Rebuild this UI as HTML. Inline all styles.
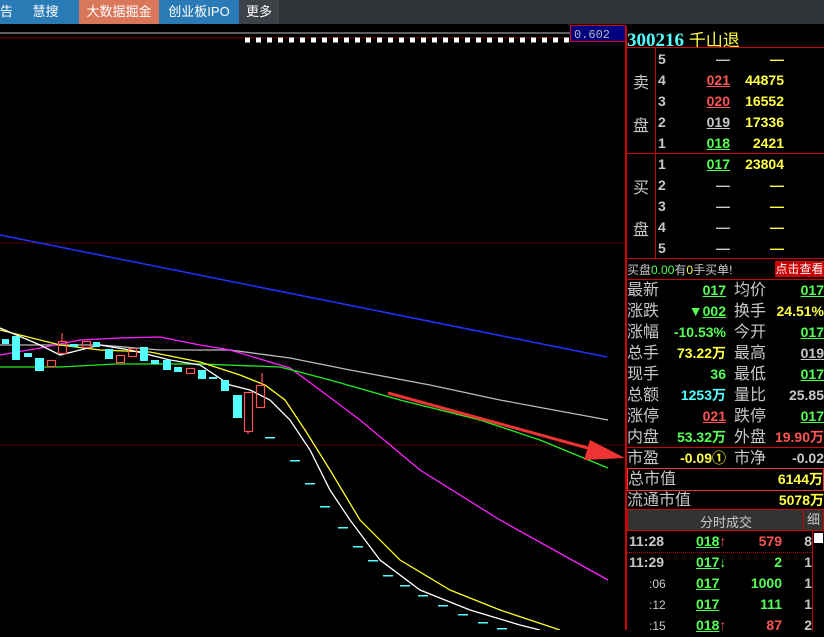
<!DOCTYPE html>
<html><head><meta charset="utf-8"><style>
*{margin:0;padding:0;box-sizing:border-box}
body{width:824px;height:630px;background:#000;overflow:hidden;position:relative;font-family:"Liberation Sans","Noto Sans CJK SC",sans-serif;color:#c8c8c8}
.tab{position:absolute;top:0;height:24px;line-height:24px;color:#fff;font-size:13px;text-align:center}
.a{position:absolute;white-space:nowrap}
.lb{font-size:16px;color:#c8c8c8}
.v{font-size:14px;font-weight:bold;text-align:right}
.g{color:#55ff55}.r{color:#ff5555}.y{color:#ffff44}.w{color:#c8c8c8}.c{color:#55ffff}
u{text-decoration:underline}
</style></head><body>
<div style="position:absolute;left:0;top:0;width:824px;height:24px;background:#2f3237"></div>
<div class="tab" style="left:0;width:12px;background:#2a7ab5">告</div>
<div class="tab" style="left:12px;width:67px;background:#2a7ab5">慧搜</div>
<div class="tab" style="left:79px;width:80px;background:#d9775a">大数据掘金</div>
<div class="tab" style="left:159px;width:80px;background:#2a7ab5">创业板IPO</div>
<div class="tab" style="left:239px;width:40px;background:#3d4148">更多</div>

<svg width="626" height="606" style="position:absolute;left:0;top:24px" viewBox="0 24 626 606">
<line x1="0" y1="33" x2="626" y2="33" stroke="#bbb"/>
<line x1="0" y1="38" x2="570" y2="38" stroke="#700"/>
<line x1="245" y1="40" x2="570" y2="40" stroke="#fff" stroke-width="5" stroke-dasharray="5 6"/>
<rect x="570.5" y="25.5" width="55" height="16" fill="#000080" stroke="#d00"/>
<text x="574" y="38" fill="#bbb" font-size="12" font-family="Liberation Mono">0.602</text>
<line x1="0" y1="243" x2="626" y2="243" stroke="#5a0000"/>
<line x1="0" y1="445" x2="626" y2="445" stroke="#5a0000"/>
<line x1="0" y1="235" x2="607" y2="357" stroke="#2233ff" stroke-width="1.5"/>
<g fill="none" stroke-width="1.3">
<polyline stroke="#bbb" points="0,345 100,345 160,350 230,350 290,358 350,370 430,385 500,400 608,420"/>
<polyline stroke="#ff22ff" points="0,355 40,348 80,340 120,338 160,337 200,345 230,350 270,362 290,368 320,390 360,420 420,470 500,520 608,580"/>
<polyline stroke="#22ee22" points="0,367 60,367 115,364 200,364 280,367 330,380 400,400 480,420 540,440 608,468"/>
<polyline stroke="#ffff22" points="0,330 60,345 100,350 150,352 200,362 240,375 265,385 285,400 305,430 330,470 360,520 400,560 450,590 500,610 560,630"/>
<polyline stroke="#fff" points="0,328 40,345 60,355 100,345 130,350 170,360 200,365 230,385 250,390 270,400 290,420 310,450 330,490 350,520 380,560 420,590 470,610 520,625 540,630"/>
</g>
<g fill="#55ffff">
<rect x="2" y="339" width="7" height="5"/><rect x="12" y="336" width="8" height="24"/><rect x="24" y="353" width="8" height="4"/><rect x="35" y="358" width="9" height="13"/><rect x="70" y="344" width="8" height="3"/><rect x="93" y="342" width="7" height="5"/><rect x="105" y="349" width="8" height="10"/><rect x="140" y="347" width="8" height="14"/><rect x="151" y="360" width="8" height="4"/><rect x="163" y="360" width="8" height="10"/><rect x="174" y="367" width="8" height="5"/><rect x="198" y="370" width="8" height="9"/><rect x="209" y="377" width="8" height="2"/><rect x="221" y="380" width="8" height="11"/><rect x="233" y="395" width="9" height="23"/>
<rect x="265" y="437" width="10" height="1.5"/><rect x="290" y="460" width="10" height="1.5"/><rect x="305" y="483" width="10" height="1.5"/><rect x="320" y="506" width="10" height="1.5"/><rect x="338" y="527" width="10" height="1.5"/><rect x="353" y="546" width="10" height="1.5"/><rect x="368" y="560" width="10" height="1.5"/><rect x="383" y="575" width="10" height="1.5"/><rect x="400" y="585" width="10" height="1.5"/><rect x="418" y="595" width="10" height="1.5"/><rect x="438" y="605" width="10" height="1.5"/><rect x="458" y="614" width="10" height="1.5"/><rect x="478" y="622" width="10" height="1.5"/><rect x="497" y="628" width="10" height="1.5"/>
</g>
<g fill="none" stroke="#ff5555" stroke-width="1.2">
<rect x="47.5" y="360.5" width="8" height="6"/><rect x="58.5" y="341.5" width="8" height="12"/><rect x="82.5" y="341.5" width="8" height="6"/><rect x="116.5" y="355.5" width="8" height="7"/><rect x="128.5" y="348.5" width="8" height="8"/><rect x="186.5" y="368.5" width="8" height="5"/><rect x="244.5" y="392.5" width="8" height="39"/><rect x="256.5" y="385.5" width="8" height="22"/>
<line x1="262" y1="373" x2="262" y2="386"/><line x1="248" y1="431" x2="248" y2="434"/><line x1="62" y1="333" x2="62" y2="342"/>
</g>
<line x1="388" y1="393" x2="595" y2="450" stroke="#ee3333" stroke-width="3"/>
<polygon points="625,458 590,440 584,460" fill="#ee3333"/>
</svg>

<!-- right panel -->
<div style="position:absolute;left:625px;top:26px;width:2px;height:604px;background:#c00"></div>
<div class="a" style="left:627px;top:26px;font-size:19px;font-weight:bold;color:#55ffff;font-family:'Liberation Serif',serif">300216 <span style="color:#ffff44;font-family:'Noto Sans CJK SC';font-weight:normal;font-size:17px">千山退</span></div>
<div style="position:absolute;left:626px;top:47px;width:198px;height:1px;background:#c00"></div>
<div style="position:absolute;left:626px;top:153px;width:198px;height:1px;background:#c00"></div>
<div style="position:absolute;left:626px;top:258px;width:198px;height:1px;background:#c00"></div>
<div style="position:absolute;left:626px;top:279px;width:198px;height:1px;background:#c00"></div>
<div style="position:absolute;left:626px;top:447px;width:198px;height:1px;background:#c00"></div>
<div style="position:absolute;left:655px;top:47px;width:1px;height:211px;background:#c00"></div>
<div class="a lb" style="left:633px;top:69px">卖</div><div class="a lb" style="left:633px;top:112px">盘</div>
<div class="a lb" style="left:633px;top:174px">买</div><div class="a lb" style="left:633px;top:216px">盘</div>

<div style="position:absolute;left:658px;top:49px;width:166px;font-size:14px;font-weight:bold;line-height:21px">
<div style="position:relative;height:21px"><span class="w">5</span><span class="a w" style="right:94px">—</span><span class="a y" style="right:40px">—</span></div>
<div style="position:relative;height:21px"><span class="w">4</span><span class="a r" style="right:94px"><u>021</u></span><span class="a y" style="right:40px">44875</span></div>
<div style="position:relative;height:21px"><span class="w">3</span><span class="a r" style="right:94px"><u>020</u></span><span class="a y" style="right:40px">16552</span></div>
<div style="position:relative;height:21px"><span class="w">2</span><span class="a w" style="right:94px"><u>019</u></span><span class="a y" style="right:40px">17336</span></div>
<div style="position:relative;height:21px"><span class="w">1</span><span class="a g" style="right:94px"><u>018</u></span><span class="a y" style="right:40px">2421</span></div>
</div>
<div style="position:absolute;left:658px;top:154px;width:166px;font-size:14px;font-weight:bold;line-height:21px">
<div style="position:relative;height:21px"><span class="w">1</span><span class="a g" style="right:94px"><u>017</u></span><span class="a y" style="right:40px">23804</span></div>
<div style="position:relative;height:21px"><span class="w">2</span><span class="a w" style="right:94px">—</span><span class="a y" style="right:40px">—</span></div>
<div style="position:relative;height:21px"><span class="w">3</span><span class="a w" style="right:94px">—</span><span class="a y" style="right:40px">—</span></div>
<div style="position:relative;height:21px"><span class="w">4</span><span class="a w" style="right:94px">—</span><span class="a y" style="right:40px">—</span></div>
<div style="position:relative;height:21px"><span class="w">5</span><span class="a w" style="right:94px">—</span><span class="a y" style="right:40px">—</span></div>
</div>
<div class="a" style="left:627px;top:261px;font-size:12px">买盘<span class="g">0.00</span>有<span class="y">0</span>手买单!</div>
<div class="a" style="left:775px;top:261px;width:49px;height:16px;background:#c00;color:#fff;font-size:12px;line-height:16px;text-align:center">点击查看</div>

<div style="position:absolute;left:627px;top:280px;width:197px;line-height:21px">
<div style="position:relative;height:21px"><span class="lb">最新</span><span class="a v g" style="right:98px"><u>017</u></span><span class="a lb" style="left:107px">均价</span><span class="a v g" style="right:0"><u>017</u></span></div>
<div style="position:relative;height:21px"><span class="lb">涨跌</span><span class="a v g" style="right:98px">▼<u>002</u></span><span class="a lb" style="left:107px">换手</span><span class="a v y" style="right:0">24.51%</span></div>
<div style="position:relative;height:21px"><span class="lb">涨幅</span><span class="a v g" style="right:98px">-10.53%</span><span class="a lb" style="left:107px">今开</span><span class="a v g" style="right:0"><u>017</u></span></div>
<div style="position:relative;height:21px"><span class="lb">总手</span><span class="a v y" style="right:98px">73.22万</span><span class="a lb" style="left:107px">最高</span><span class="a v w" style="right:0"><u>019</u></span></div>
<div style="position:relative;height:21px"><span class="lb">现手</span><span class="a v g" style="right:98px">36</span><span class="a lb" style="left:107px">最低</span><span class="a v g" style="right:0"><u>017</u></span></div>
<div style="position:relative;height:21px"><span class="lb">总额</span><span class="a v c" style="right:98px">1253万</span><span class="a lb" style="left:107px">量比</span><span class="a v w" style="right:0">25.85</span></div>
<div style="position:relative;height:21px"><span class="lb">涨停</span><span class="a v r" style="right:98px"><u>021</u></span><span class="a lb" style="left:107px">跌停</span><span class="a v g" style="right:0"><u>017</u></span></div>
<div style="position:relative;height:21px"><span class="lb">内盘</span><span class="a v g" style="right:98px">53.32万</span><span class="a lb" style="left:107px">外盘</span><span class="a v r" style="right:0">19.90万</span></div>
<div style="position:relative;height:21px"><span class="lb">市盈</span><span class="a v y" style="right:98px">-0.09①</span><span class="a lb" style="left:107px">市净</span><span class="a v w" style="right:0">-0.02</span></div>
<div style="position:relative;height:21px;outline:1px solid #e33;margin:0 1px 0 1px"><span class="lb">总市值</span><span class="a v y" style="right:0">6144万</span></div>
<div style="position:relative;height:21px"><span class="lb">流通市值</span><span class="a v y" style="right:0">5078万</span></div>
</div>

<div style="position:absolute;left:627px;top:509px;width:197px;height:22px;background:#333;border:1px solid #c00"></div>
<div class="a" style="left:700px;top:512px;font-size:13px">分时成交</div>
<div class="a" style="left:803px;top:509px;width:21px;height:22px;border:1px solid #c00;font-size:13px;text-align:center;line-height:20px">细</div>
<div style="position:absolute;left:627px;top:552px;width:185px;border-top:1px dotted #c00"></div>
<div style="position:absolute;left:812px;top:531px;width:1px;height:99px;background:#c00"></div>
<div class="a" style="left:814px;top:533px;width:9px;height:10px;background:#fff"></div>
<div style="position:absolute;left:629px;top:531px;width:183px;font-size:14px;font-weight:bold;line-height:21px">
<div style="position:relative;height:21px"><span class="w">11:28</span><span class="a g" style="left:67px"><u>018</u><span class="r">↑</span></span><span class="a r" style="right:30px">579</span><span class="a w" style="right:0">8</span></div>
<div style="position:relative;height:21px"><span class="w">11:29</span><span class="a g" style="left:67px"><u>017</u>↓</span><span class="a g" style="right:30px">2</span><span class="a w" style="right:0">1</span></div>
<div style="position:relative;height:21px"><span class="w" style="font-weight:normal;font-size:12px;margin-left:20px">:06</span><span class="a g" style="left:67px"><u>017</u></span><span class="a g" style="right:30px">1000</span><span class="a w" style="right:0">1</span></div>
<div style="position:relative;height:21px"><span class="w" style="font-weight:normal;font-size:12px;margin-left:20px">:12</span><span class="a g" style="left:67px"><u>017</u></span><span class="a g" style="right:30px">111</span><span class="a w" style="right:0">1</span></div>
<div style="position:relative;height:21px"><span class="w" style="font-weight:normal;font-size:12px;margin-left:20px">:15</span><span class="a g" style="left:67px"><u>018</u><span class="r">↑</span></span><span class="a r" style="right:30px">87</span><span class="a w" style="right:0">2</span></div>
</div>
</body></html>
